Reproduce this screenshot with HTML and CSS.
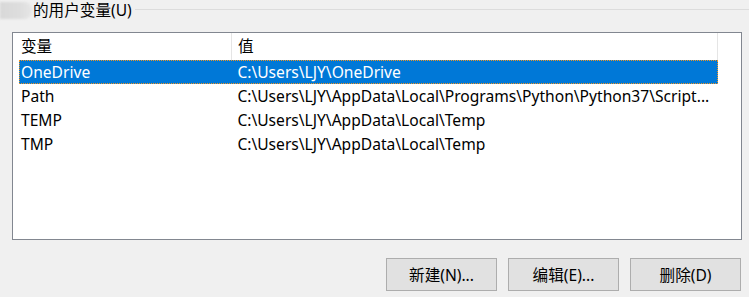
FILE: index.html
```html
<!DOCTYPE html>
<html lang="zh-CN">
<head>
    <meta charset="UTF-8">
    <title>环境变量</title>
    <link rel="stylesheet" href="styles.css">
</head>
<body>
    <div class="group">
        <div class="legend">
            <span class="blur"></span>
            <span class="legend-text">的用户变量(U)</span>
            <span class="legend-line"></span>
        </div>

        <div class="list">
            <div class="row header">
                <div class="cell name">变量</div>
                <div class="cell value">值</div>
            </div>
            <div class="row selected">
                <div class="cell name">OneDrive</div>
                <div class="cell value">C:\Users\LJY\OneDrive</div>
            </div>
            <div class="row">
                <div class="cell name">Path</div>
                <div class="cell value">C:\Users\LJY\AppData\Local\Programs\Python\Python37\Script...</div>
            </div>
            <div class="row">
                <div class="cell name">TEMP</div>
                <div class="cell value">C:\Users\LJY\AppData\Local\Temp</div>
            </div>
            <div class="row">
                <div class="cell name">TMP</div>
                <div class="cell value">C:\Users\LJY\AppData\Local\Temp</div>
            </div>
        </div>

        <div class="buttons">
            <button>新建(N)...</button>
            <button>编辑(E)...</button>
            <button>删除(D)</button>
        </div>
    </div>
</body>
</html>
```

FILE: styles.css
```css
* {
    margin: 0;
    padding: 0;
    box-sizing: border-box;
}

body {
    background: #f0f0f0;
    font-family: "Noto Sans", "Noto Sans CJK SC", sans-serif;
    font-size: 15.6px;
    color: #000;
    width: 749px;
    height: 297px;
    overflow: hidden;
}

.legend {
    display: flex;
    align-items: center;
    height: 20px;
}

.blur {
    width: 32px;
    height: 17px;
    background: linear-gradient(90deg, #d8d8d8, #dddddd 60%, #e6e6e6);
    border-radius: 0 8px 8px 0;
    filter: blur(1px);
}

.legend-text {
    padding: 0 3px 0 1px;
    line-height: 20px;
}

.legend-line {
    flex: 1;
    border-top: 1px solid #dcdcdc;
    margin-top: -2px;
}

.list {
    margin: 12px 0 0 12px;
    width: 730px;
    height: 208px;
    border: 1px solid #828790;
    background: #fff;
    padding-left: 6px;
}

.row {
    display: flex;
    width: 699px;
    height: 24px;
    align-items: center;
    border: 1px solid transparent;
}

.row.header {
    height: 27px;
    border: none;
}

.header .cell {
    height: 27px;
    line-height: 26px;
    border-right: 1px solid #e5e5e5;
}

.cell {
    white-space: nowrap;
    overflow: hidden;
}

.name {
    width: 213px;
    padding-left: 1px;
}

.value {
    width: 486px;
    padding-left: 5px;
}

.header .name {
    padding-left: 2px;
}

.header .value {
    padding-left: 6px;
}

.row.selected {
    background: #0078d7;
    color: #fff;
    border: 1px dotted #f39521;
}

.buttons {
    display: flex;
    justify-content: flex-end;
    gap: 11px;
    padding-right: 8px;
    margin-top: 18px;
}

button {
    width: 111px;
    height: 33px;
    background: #e1e1e1;
    border: 1px solid #adadad;
    font-family: "Noto Sans", "Noto Sans CJK SC", sans-serif;
    font-size: 15.6px;
    color: #000;
}
```
